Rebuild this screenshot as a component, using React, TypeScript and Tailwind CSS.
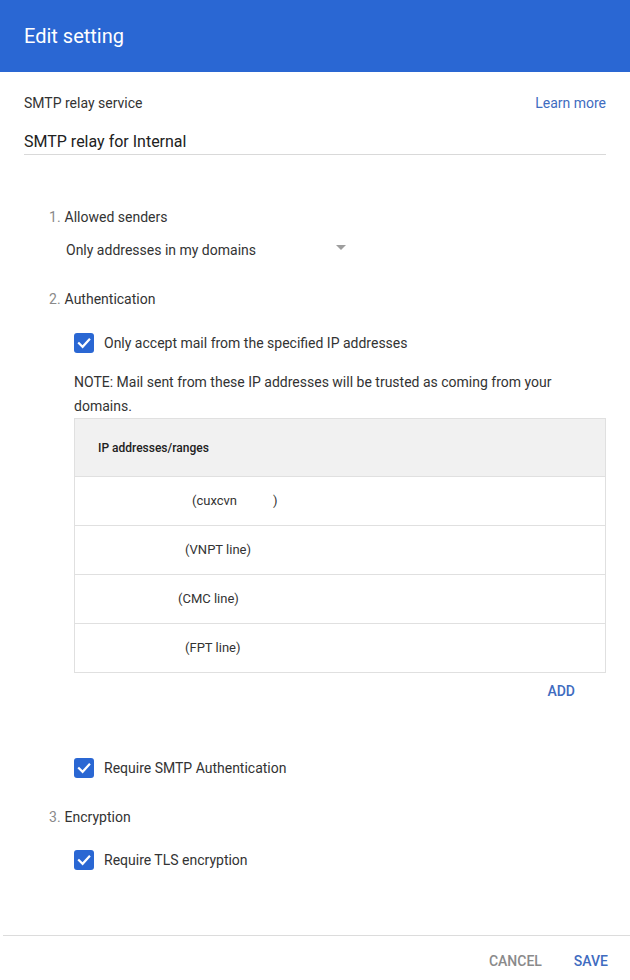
import React from "react";

function Checkbox({ label }: { label: string }) {
  return (
    <div className="flex h-[20px] items-center gap-[10px]">
      <span className="flex h-[20px] w-[20px] items-center justify-center rounded-[3px] bg-[#2a67d3]">
        <svg width="20" height="20" viewBox="0 0 20 20" fill="none">
          <polyline
            points="5,10.3 8.6,13.8 15.2,6.6"
            stroke="white"
            strokeWidth="2.2"
            strokeLinecap="square"
          />
        </svg>
      </span>
      <span className="text-[14px] leading-[20px] text-[#333]">{label}</span>
    </div>
  );
}

function StepTitle({ n, title }: { n: number; title: string }) {
  return (
    <div className="flex h-[20px] items-center pl-[25px] text-[14px] leading-[20px]">
      <span className="text-[#8a8a8a]">{n}.</span>
      <span className="ml-[4px] text-[#333]">{title}</span>
    </div>
  );
}

export default function App() {
  return (
    <div
      className="flex h-[980px] w-[630px] flex-col bg-white"
      style={{ fontFamily: "Roboto, 'Liberation Sans', sans-serif" }}
    >
      <header className="flex h-[72px] shrink-0 items-center bg-[#2a67d3] px-6">
        <h1 className="text-[20px] font-normal text-white">Edit setting</h1>
      </header>

      <div className="flex-1 px-6">
        <div className="mt-[21px] flex h-[20px] items-center justify-between text-[14px] leading-[20px]">
          <span className="text-[#333]">SMTP relay service</span>
          <a className="text-[#3f6cc0]">Learn more</a>
        </div>

        <div className="mt-[17px] border-b border-[#d9d9d9] text-[16px] leading-[24px] text-[#212121]">
          SMTP relay for Internal
        </div>

        <div className="mt-[52px]">
          <StepTitle n={1} title="Allowed senders" />
        </div>

        <div className="mt-[13px] ml-[42px] flex h-[20px] w-[280px] items-center justify-between text-[14px] leading-[20px] text-[#333]">
          <span>Only addresses in my domains</span>
          <span className="mt-[-6px] h-0 w-0 border-x-[5px] border-t-[5px] border-x-transparent border-t-[#9e9e9e]" />
        </div>

        <div className="mt-[29px]">
          <StepTitle n={2} title="Authentication" />
        </div>

        <div className="ml-[50px]">
          <div className="mt-[24px]">
            <Checkbox label="Only accept mail from the specified IP addresses" />
          </div>

          <p className="mt-[17px] text-[14px] leading-[24px] text-[#333]">
            NOTE: Mail sent from these IP addresses will be trusted as coming
            from your domains.
          </p>

          <div className="border border-[#e0e0e0]">
            <div className="flex h-[57px] items-center bg-[#f1f1f1] pl-[23px] text-[12px] font-medium text-[#212121]">
              IP addresses/ranges
            </div>
            <div className="flex h-[49px] items-center border-t border-[#e0e0e0] pl-[117px] text-[13px] text-[#333]">
              <span>(cuxcvn</span>
              <span className="inline-block w-[36px]" />
              <span>)</span>
            </div>
            <div className="flex h-[49px] items-center border-t border-[#e0e0e0] pl-[110px] text-[13px] text-[#333]">
              (VNPT line)
            </div>
            <div className="flex h-[49px] items-center border-t border-[#e0e0e0] pl-[103px] text-[13px] text-[#333]">
              (CMC line)
            </div>
            <div className="flex h-[49px] items-center border-t border-[#e0e0e0] pl-[110px] text-[13px] text-[#333]">
              (FPT line)
            </div>
          </div>

          <div className="mt-[8px] flex h-[20px] items-center justify-end pr-[31px]">
            <button className="text-[14px] font-medium text-[#3f6cc0]">ADD</button>
          </div>

          <div className="mt-[57px]">
            <Checkbox label="Require SMTP Authentication" />
          </div>
        </div>

        <div className="mt-[29px]">
          <StepTitle n={3} title="Encryption" />
        </div>

        <div className="mt-[23px] ml-[50px]">
          <Checkbox label="Require TLS encryption" />
        </div>
      </div>

      <footer className="ml-[3px] flex h-[45px] shrink-0 items-start justify-end gap-[32px] border-t border-[#dcdcdc] pt-[15px] pr-[22px] text-[14px] leading-[20px] font-medium">
        <button className="text-[#8a8a8a]">CANCEL</button>
        <button className="text-[#3f6cc0]">SAVE</button>
      </footer>
    </div>
  );
}
